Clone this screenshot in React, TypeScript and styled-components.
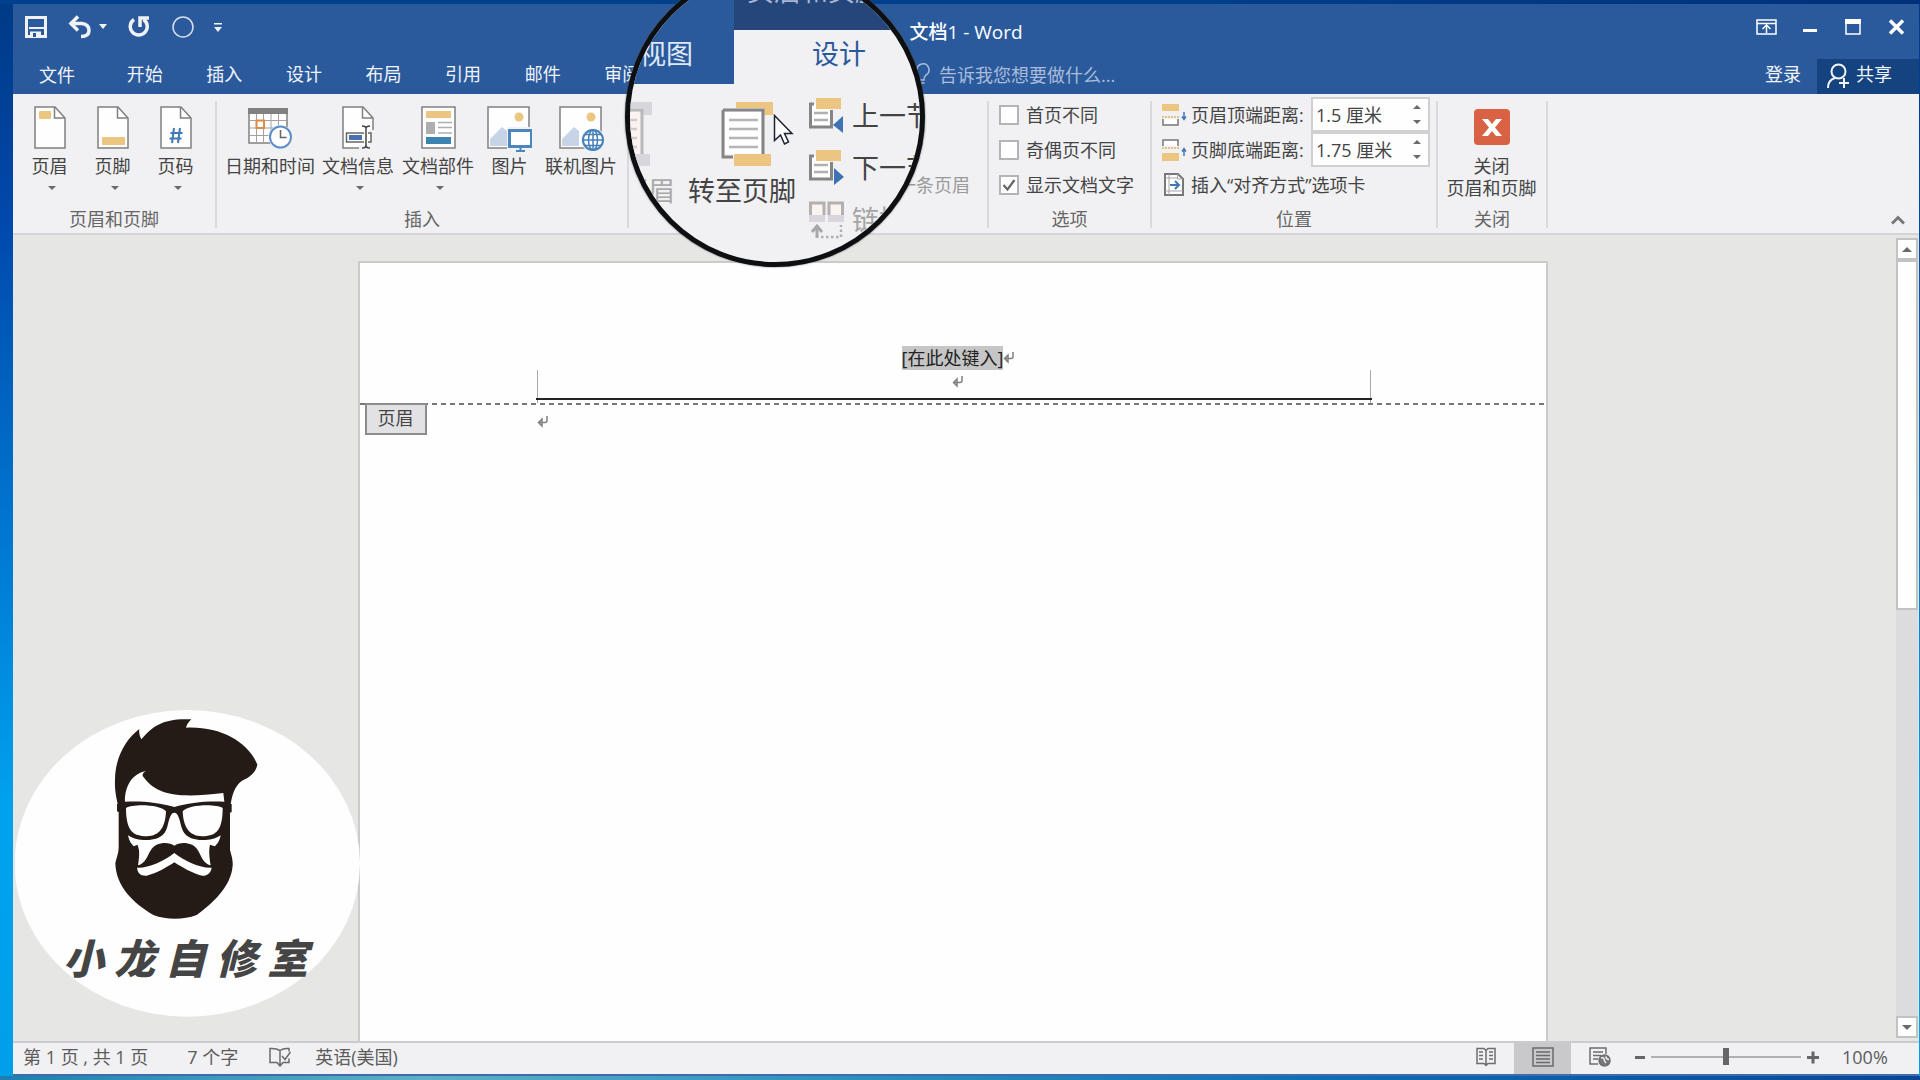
import React, { useState } from "react";
import styled, { createGlobalStyle, css } from "styled-components";

const color = {
  brand: "#2b5a9c",
  brandDark: "#14437f",
  ribbon: "#f1f1f3",
  line: "#d4d4d6",
  canvas: "#e6e6e5",
  text: "#444444",
  muted: "#666666",
  icon: "#808080",
  amber: "#ecc681",
  blue: "#3f78b5",
};

const GlobalStyle = createGlobalStyle`
  * { box-sizing: border-box; }
  body { margin: 0; overflow: hidden; }
  button, input, a {
    font: inherit;
    color: inherit;
    padding: 0;
    margin: 0;
    border: 0;
    background: none;
    text-decoration: none;
    text-align: inherit;
  }
  svg { display: block; flex: none; }
`;

const Desktop = styled.div`
  position: relative;
  display: flex;
  height: 100vh;
  padding: 4px 1px 4px 13px;
  overflow: hidden;
  font-family: "Open Sans", "Noto Sans CJK SC", sans-serif;
  font-size: 18px;
  line-height: 24px;
  color: ${color.text};
  background:
    linear-gradient(90deg, #1c7fb0, #5fb0c4 22%, #2b8fc0 45%, #0f6cb4 70%, #0a4596) bottom / 100% 4px no-repeat,
    linear-gradient(90deg, #00418f, #00408c 60%, #00307a) top / 100% 4px no-repeat,
    linear-gradient(180deg, #003a85, #0048ab 20%, #0078d2 50%, #00a2ee 75%, #009fea);
`;

const Window = styled.main`
  position: relative;
  flex: 1;
  display: flex;
  flex-direction: column;
  min-width: 0;
  background: ${color.brand};
  border-bottom: 2px solid #3f6cab;
`;

/* ---------- title bar and tabs ---------- */

const TitleBar = styled.header`
  display: grid;
  grid-template-columns: 1fr auto 1fr;
  height: 52px;
  color: #fff;
`;

const QuickTools = styled.div`
  display: flex;
  align-items: flex-start;
  padding: 11px 0 0 11px;
`;

const ToolButton = styled.button<{ $gap?: number }>`
  display: flex;
  align-items: center;
  height: 24px;
  margin-right: ${(p) => p.$gap ?? 0}px;
`;

const Title = styled.h1`
  margin: 0;
  padding-top: 16px;
  font-size: 19px;
  line-height: 24px;
  font-weight: 500;
`;

const WindowControls = styled.div`
  display: flex;
  justify-content: flex-end;
  align-items: flex-start;
  gap: 26px;
  padding: 11px 14px 0 0;
`;

const TabBar = styled.nav`
  display: flex;
  height: 38px;
  color: #f0f4fa;
`;

const FileTab = styled.button`
  width: 92px;
  padding: 1px 0 2px 26px;
`;

const Tabs = styled.div`
  display: flex;
  width: 557px;
`;

const Tab = styled.button`
  flex: 1;
  padding-bottom: 2px;
  text-align: center;
`;

const TellMe = styled.label`
  flex: 1;
  display: flex;
  align-items: center;
  gap: 8px;
  padding: 0 0 0 252px;
  color: #a9bcdb;
`;

const TellMeInput = styled.input`
  width: 220px;
  outline: none;
  &::placeholder {
    color: #a9bcdb;
    opacity: 1;
  }
`;

const SignIn = styled.a`
  padding: 6px 16px 0 0;
`;

const Share = styled.button`
  display: flex;
  align-items: center;
  gap: 6px;
  align-self: flex-start;
  width: 102px;
  height: 35px;
  margin-top: 3px;
  padding: 0 0 5px 10px;
  background: ${color.brandDark};
  svg {
    margin-top: 4px;
  }
`;

/* ---------- ribbon ---------- */

const Ribbon = styled.section`
  display: flex;
  height: 141px;
  padding: 7px 0 5px;
  background: ${color.ribbon};
  border-bottom: 2px solid ${color.line};
`;

const Group = styled.section<{ $width: number }>`
  display: flex;
  flex-direction: column;
  min-width: ${(p) => p.$width}px;
  border-right: 2px solid #dadadc;
`;

const GroupBody = styled.div<{ $end?: boolean }>`
  flex: 1;
  display: flex;
  padding-left: 5px;
  justify-content: ${(p) => (p.$end ? "flex-end" : "flex-start")};
`;

const GroupName = styled.h2`
  margin: 0;
  font-size: 18px;
  line-height: 18px;
  font-weight: 400;
  text-align: center;
  color: ${color.muted};
`;

const LargeButton = styled.button<{ $width: number }>`
  display: flex;
  flex-direction: column;
  align-items: center;
  justify-content: flex-start;
  width: ${(p) => p.$width}px;
  padding-top: 5px;
  white-space: nowrap;
  text-align: center;
`;

const IconBox = styled.span`
  display: flex;
  justify-content: center;
  height: 49px;
`;

const LargeLabel = styled.span`
  line-height: 22px;
`;

const Caret = styled.i<{ $up?: boolean; $size?: number }>`
  display: block;
  border: ${(p) => p.$size ?? 4}px solid transparent;
  ${(p) =>
    p.$up
      ? css`border-top-width: 0; border-bottom-color: #6a6a6a;`
      : css`border-bottom-width: 0; border-top-color: #6a6a6a;`}
`;

const ButtonCaret = styled(Caret)`
  margin: 9px 0 0 4px;
`;

const Rows = styled.div`
  display: grid;
  grid-auto-rows: 35px;
  align-content: start;
  align-items: center;
  margin-top: -4px;
  padding-left: 5px;
`;

const CheckRow = styled.label`
  display: flex;
  align-items: center;
  gap: 7px;
  white-space: nowrap;
`;

const CheckBox = styled.input`
  appearance: none;
  width: 20px;
  height: 20px;
  border: 2px solid #b4b4b4;
  background: #fefefe;
  &:checked {
    background: #fefefe
      url("data:image/svg+xml,%3Csvg xmlns='http://www.w3.org/2000/svg' viewBox='0 0 16 16'%3E%3Cpath d='M2.5 8l4 4.5L13.500 3' fill='none' stroke='%23666' stroke-width='2.200'/%3E%3C/svg%3E");
  }
`;

const DistanceRow = styled.div`
  display: flex;
  align-items: center;
  gap: 4px;
`;

const DistanceLabel = styled.label`
  width: 116px;
  white-space: nowrap;
`;

const Spinner = styled.span`
  display: flex;
  width: 119px;
  height: 35px;
  border: 2px solid #d0d0d2;
  background: #fefefe;
`;

const SpinnerInput = styled.input`
  flex: 1;
  min-width: 0;
  padding-left: 3px;
  outline: none;
`;

const SpinnerArrows = styled.span`
  display: grid;
  grid-template-rows: 1fr 1fr;
  width: 15px;
`;

const SpinnerArrow = styled.button`
  display: flex;
  align-items: center;
`;

const RowButton = styled.button`
  display: flex;
  align-items: center;
  gap: 4px;
  white-space: nowrap;
`;

const LinkPrevious = styled.button`
  align-self: flex-start;
  height: 34px;
  margin: 67px 17px 0 0;
  color: #9a9a9a;
`;

const Collapse = styled.button`
  align-self: flex-end;
  margin: 0 14px 0 auto;
`;

/* ---------- document ---------- */

const Workspace = styled.div`
  flex: 1;
  display: flex;
  min-height: 0;
  background: ${color.canvas};
`;

const Canvas = styled.div`
  flex: 1;
  display: flex;
  justify-content: center;
  padding: 26px 4px 0 0;
`;

const Page = styled.article`
  width: 1190px;
  background: #fefefe;
  border: 2px solid #cbcbcc;
  border-bottom: 0;
`;

const HeaderZone = styled.div`
  display: flex;
  flex-direction: column;
  align-items: center;
  height: 140px;
  padding-top: 83px;
`;

const HeaderLine = styled.div`
  display: flex;
  align-items: center;
  padding-left: 12px;
  color: #222;
`;

const Placeholder = styled.span`
  background: #c6c6c6;
`;

const HeaderMark = styled.div`
  padding: 6px 0 0 11px;
`;

const HeaderEdges = styled.div`
  align-self: stretch;
  height: 36px;
  margin: -18px 175px 0 177px;
  border: 1px solid #a8a8a8;
  border-width: 0 1px;
  padding-top: 28px;
`;

const HeaderRule = styled.hr`
  margin: 0 -2px;
  border: 0;
  height: 2px;
  background: #222;
`;

const Boundary = styled.div`
  height: 2px;
  background: repeating-linear-gradient(90deg, #777 0 5px, transparent 5px 9px);
`;

const BodyStart = styled.div`
  display: flex;
  align-items: flex-start;
`;

const HeaderTag = styled.span`
  width: 62px;
  height: 32px;
  margin: -2px 0 0 5px;
  border: 2px solid #8c8c8e;
  background: #e2e2e4;
  line-height: 26px;
  text-align: center;
`;

const BodyMark = styled.span`
  padding: 11px 0 0 110px;
`;

const ScrollBar = styled.div`
  display: flex;
  flex-direction: column;
  width: 22px;
  margin: 3px 1px 3px 0;
  background: #dcdcde;
`;

const ScrollButton = styled.button`
  display: flex;
  align-items: center;
  justify-content: center;
  height: 22px;
  border: 2px solid #c2c2c4;
  background: #fefefe;
`;

const ScrollThumb = styled.div`
  flex: 46;
  border: 2px solid #c2c2c4;
  background: #fefefe;
`;

const ScrollTrack = styled.div`
  flex: 54;
`;

/* ---------- status bar ---------- */

const StatusBar = styled.footer`
  display: flex;
  align-items: center;
  height: 33px;
  padding-left: 10px;
  background: ${color.ribbon};
  border-top: 2px solid #cbcbcd;
  color: #5c5c5c;
  white-space: pre;
`;

const StatusItem = styled.button<{ $gap?: number }>`
  margin-right: ${(p) => p.$gap ?? 0}px;
  padding-bottom: 4px;
`;

const StatusRight = styled.div`
  display: flex;
  align-items: center;
  align-self: stretch;
  margin-left: auto;
  padding-right: 22px;
`;

const ViewButton = styled.button<{ $on?: boolean }>`
  display: flex;
  align-items: center;
  justify-content: center;
  align-self: stretch;
  width: 57px;
  padding-bottom: 3px;
  background: ${(p) => (p.$on ? "#c9c9cb" : "transparent")};
`;

const ZoomStep = styled.button`
  display: flex;
  padding-bottom: 4px;
`;

const ZoomRange = styled.input`
  appearance: none;
  width: 150px;
  height: 20px;
  margin: 0 5px 4px;
  background: linear-gradient(#b0b0b0, #b0b0b0) center / 100% 2px no-repeat;
  &::-webkit-slider-thumb {
    appearance: none;
    width: 6px;
    height: 17px;
    background: #666;
  }
`;

const ZoomValue = styled.output`
  width: 77px;
  padding: 0 0 4px 22px;
`;

/* ---------- channel badge ---------- */

const Badge = styled.aside`
  position: absolute;
  left: 2px;
  bottom: 57px;
  width: 345px;
  height: 307px;
`;

const BadgeName = styled.div`
  position: absolute;
  left: 48px;
  top: 220px;
  display: flex;
  gap: 10px;
  font-size: 41px;
  line-height: 56px;
  font-weight: 900;
  font-style: italic;
  color: #454545;
`;

/* ---------- magnifier ---------- */

const Lens = styled.div`
  position: absolute;
  left: 625px;
  top: -33px;
  width: 300px;
  height: 300px;
  border: 5px solid #0d0f12;
  border-radius: 50%;
  overflow: hidden;
  background: ${color.ribbon};
  font-size: 27px;
  line-height: 36px;
  white-space: nowrap;
  box-shadow: 0 0 2px #555;
`;

const LensTabs = styled.div`
  display: flex;
  height: 112px;
`;

const LensViewTab = styled.button`
  width: 104px;
  padding: 52px 0 0 9px;
  background: ${color.brand};
  color: #dfe8f5;
`;

const LensContext = styled.div`
  flex: 1;
  display: flex;
  flex-direction: column;
  min-width: 0;
`;

const LensContextName = styled.span`
  height: 58px;
  padding-left: 13px;
  line-height: 38px;
  background: #24467a;
  color: #a9b8d2;
`;

const LensDesignTab = styled.button`
  padding: 6px 0 0 78px;
  color: ${color.brand};
`;

const LensBody = styled.div`
  display: flex;
  gap: 13px;
`;

const LensLarge = styled.button<{ $muted?: boolean }>`
  flex: none;
  display: flex;
  flex-direction: column;
  align-items: flex-start;
  justify-content: flex-start;
  gap: 7px;
  width: 108px;
  padding-top: 17px;
  color: ${(p) => (p.$muted ? "#aaaaaa" : color.text)};
  &:first-child {
    margin-left: -63px;
  }
  svg {
    align-self: flex-end;
    margin-right: 18px;
  }
`;

const LensRows = styled.div`
  display: grid;
  grid-auto-rows: 52px;
  padding-top: 6px;
`;

const LensRow = styled.button<{ $muted?: boolean }>`
  display: flex;
  align-items: center;
  gap: 8px;
  color: ${(p) => (p.$muted ? "#a4a4a4" : color.text)};
`;

const Pointer = styled.svg`
  position: absolute;
  left: 773px;
  top: 114px;
`;

/* ---------- icons ---------- */

const DocShape = ({ kind }: { kind: "header" | "footer" | "number" | "info" }) => (
  <svg width="32" height="43" viewBox="0 0 32 43">
    <path d="M1 1h20l10 11v30H1z" fill="#fefefe" stroke={color.icon} strokeWidth="1.500" />
    <path d="M20.500 1v11H31" fill="none" stroke={color.icon} strokeWidth="1.500" />
    {kind === "header" && <rect x="5" y="5" width="12" height="8" rx="1" fill={color.amber} />}
    {kind === "footer" && <rect x="5" y="31" width="23" height="8" rx="1" fill={color.amber} />}
    {kind === "number" && (
      <path d="M14 22l-2 15M20 22l-2 15M10.500 27h12M9.500 32.500h12" stroke={color.blue} strokeWidth="2" fill="none" />
    )}
    {kind === "info" && (
      <g>
        <path d="M17 39h15v4H17zM27 24h5v18h-5z" fill={color.ribbon} />
        <path d="M22 27H4.500v9H22M26 27h3v9h-3" fill="#fefefe" stroke="#666" strokeWidth="1.500" />
        <rect x="7" y="29" width="13" height="5" fill="#4a70b0" />
        <path d="M20 20q4 0 4 2.500v17q0 2.500-4 2.500M28 20q-4 0-4 2.500v17q0 2.500 4 2.500" fill="none" stroke="#444" strokeWidth="1.500" />
      </g>
    )}
  </svg>
);

const CalendarIcon = () => (
  <svg width="44" height="43" viewBox="0 0 44 43">
    <rect x="1" y="3" width="38" height="34" fill="#fefefe" stroke={color.icon} strokeWidth="1.500" />
    <rect x="0" y="2" width="40" height="6" fill={color.icon} />
    <path d="M8.500 8v29M15.500 8v29M23 8v29M30.500 8v29M1 14.500h38M1 22h38M1 29.500h38" stroke="#a2a2a2" fill="none" />
    <rect x="8.500" y="14.500" width="7.500" height="7.500" fill="#fefefe" stroke="#de8b45" strokeWidth="2" />
    <circle cx="32.500" cy="31" r="12" fill={color.ribbon} />
    <circle cx="32.500" cy="31" r="10.500" fill="#fefefe" stroke="#5b8fc7" strokeWidth="2" />
    <path d="M32.500 24v7.500h6" fill="none" stroke="#666" strokeWidth="1.500" />
  </svg>
);

const PartsIcon = () => (
  <svg width="35" height="43" viewBox="0 0 35 43">
    <rect x="1" y="1" width="33" height="41" fill="#fefefe" stroke={color.icon} strokeWidth="1.500" />
    <rect x="5" y="5" width="25" height="7" fill={color.amber} />
    <rect x="5" y="16" width="9" height="12" fill="#aeaeae" />
    <path d="M17 16.500h14M17 21.500h14M17 27h14" stroke="#aeaeae" strokeWidth="1.500" />
    <rect x="5" y="31" width="25" height="7" fill="#3d84b0" />
  </svg>
);

const PictureIcon = ({ online }: { online?: boolean }) => (
  <svg width="45" height="46" viewBox="0 0 45 46">
    <rect x="1" y="1" width="41" height="41" fill="#fefefe" stroke={color.icon} strokeWidth="1.500" />
    <circle cx="32" cy="11" r="4.500" fill={color.amber} />
    <path d="M3 40v-7l12-12 5 4v15z" fill="#c7d3e6" />
    {online ? (
      <g fill="none" stroke="#4580bb" strokeWidth="1.500">
        <circle cx="34" cy="34" r="12" fill={color.ribbon} stroke="none" />
        <circle cx="34" cy="34" r="10" fill="#fefefe" strokeWidth="2" />
        <ellipse cx="34" cy="34" rx="4.500" ry="10" />
        <path d="M24 34h20M34 24v20M26 28.500h16M26 39.500h16" />
      </g>
    ) : (
      <g>
        <path d="M20 21h25v25H20z" fill={color.ribbon} />
        <rect x="22.500" y="24.500" width="22" height="16" fill="#fefefe" stroke="#4b86bd" strokeWidth="3" />
        <path d="M33.500 41v3M29 45h9" stroke="#4b86bd" strokeWidth="2" />
      </g>
    )}
  </svg>
);

const DistanceIcon = ({ bottom }: { bottom?: boolean }) => (
  <svg width="25" height="22" viewBox="0 0 25 22">
    {bottom ? (
      <g>
        <path d="M1 7V1h15v6" fill="#fefefe" stroke="#777" strokeWidth="1.500" />
        <path d="M0 9h18" stroke="#e0b068" strokeWidth="1.500" strokeDasharray="2 1" />
        <rect y="14" width="17" height="8" fill={color.amber} />
        <path d="M22 17v-7M20 12.500l2-3 2 3" fill="none" stroke={color.blue} strokeWidth="1.500" />
      </g>
    ) : (
      <g>
        <rect width="17" height="7" fill={color.amber} />
        <path d="M0 13h18" stroke="#e0b068" strokeWidth="1.500" strokeDasharray="2 1" />
        <path d="M1 15v6h15v-6" fill="#fefefe" stroke="#777" strokeWidth="1.500" />
        <path d="M22 8v7M20 12.500l2 3 2-3" fill="none" stroke={color.blue} strokeWidth="1.500" />
      </g>
    )}
  </svg>
);

const AlignTabIcon = () => (
  <svg width="25" height="24" viewBox="0 0 25 24">
    <path d="M3 1h13l5 5v16H3z" fill="#fefefe" stroke="#777" strokeWidth="2" />
    <path d="M7 1v21M3 5h12M3 18h18M15.500 1v5H21" fill="none" stroke="#a5a5a5" />
    <path d="M8 12h9M13 8l4 4-4 4" fill="none" stroke={color.blue} strokeWidth="2" />
  </svg>
);

const ReturnMark = () => (
  <svg width="12" height="12" viewBox="0 0 12 12">
    <path d="M10 0v4.500q0 2-2 2H2M5 3L1.500 6.500 5 10z" fill="none" stroke="#808080" strokeWidth="1.500" />
  </svg>
);

const GotoIcon = ({ muted }: { muted?: boolean }) => (
  <svg width="60" height="65" viewBox="0 0 60 65">
    <path d="M18 1h37v13h-9V7H18z" fill={muted ? "#d8d6dc" : color.amber} />
    <path d="M5 9h40v44M5 9v47h10" fill="none" stroke={muted ? "#b8b8ba" : "#858585"} strokeWidth="3" />
    <path d="M7 11h36v42H7z" fill={muted ? "#fbf3f1" : "#fefefe"} />
    <path d="M11 19h29M11 28h29M11 37h29M11 46h29" stroke={muted ? "#d9c8c8" : "#b5b5b5"} strokeWidth="2.500" />
    <rect x="16" y="53" width="37" height="12" rx="1" fill={muted ? "#d8d6dc" : color.amber} />
  </svg>
);

const SectionIcon = ({ next }: { next?: boolean }) => (
  <svg width="35" height="36" viewBox="0 0 35 36">
    <path d="M5 6H1.500v23h21V12" fill="#fefefe" stroke="#858585" strokeWidth="3" />
    <path d="M5 15h14M5 22h14" stroke="#b0b0b0" strokeWidth="2.500" />
    <rect x="7" y="0" width="25" height="11" fill={color.amber} />
    <path d={next ? "M25 18v17l10-8z" : "M34 18v17l-10-8z"} fill="#3f72b4" />
  </svg>
);

const LinkIcon = () => (
  <svg width="35" height="38" viewBox="0 0 35 38">
    <path d="M1.500 14V2H15v12M20 14V2h13.500v12" fill="#fbf3f0" stroke="#b5b0b0" strokeWidth="3" />
    <path d="M0 14h16v7H0zM19 14h16v7H19z" fill="#d8d5dc" />
    <path d="M8 37V26M3 31l5-6 5 6" fill="none" stroke="#a8a8a8" strokeWidth="3" />
    <path d="M12 36h20V24" fill="none" stroke="#b0b0b0" strokeWidth="2.500" strokeDasharray="2.500 2.500" />
  </svg>
);

const Portrait = () => (
  <svg width="345" height="307" viewBox="45 60 1035 921">
    <ellipse cx="562" cy="520" rx="518" ry="460" fill="#fefefe" />
    <path
      fill="#241b17"
      d="M345 270C345 200 380 145 418 117C416 130 420 140 424 148C458 108 490 84 574 88C566 96 560 104 558 113C660 108 745 155 772 224C765 255 742 264 725 273C702 290 696 320 692 342H695V366L690 368V480C697 505 700 515 697 535C690 590 640 640 590 675C550 690 500 690 460 675C400 640 348 590 346 520C350 500 356 490 356 470V366L351 364V342H353C346 310 344 290 345 270Z"
    />
    <g fill="#fefefe">
      <path d="M375 335C374 290 395 252 437 243C430 248 427 252 428 258C465 310 520 328 670 309L673 335C620 332 565 338 523 351C480 338 425 332 375 335Z" />
      <path d="M378 354C400 340 484 344 498 364C496 410 480 438 440 439C400 438 378 425 378 354Z" />
      <path d="M668 354C646 340 562 344 548 364C550 410 566 438 606 439C646 438 668 425 668 354Z" />
      <path d="M523 368C512 368 508 385 502 410C494 440 470 451 430 450C410 449 395 444 384 436C388 455 396 465 402 469L412 464C420 480 418 500 414 526C448 515 440 480 470 464C490 456 510 458 523 467C536 458 556 456 576 464C606 480 598 515 632 526C628 500 626 480 630 464L644 469C650 465 658 455 662 436C651 444 636 449 616 450C576 451 552 440 544 410C538 385 534 368 523 368Z" />
      <path d="M411 533C440 536 490 515 523 489C556 515 606 536 635 533C632 552 618 560 600 556C580 550 545 532 523 517C500 532 470 550 440 557C420 558 413 548 411 533Z" />
    </g>
  </svg>
);

const tabs = ["开始", "插入", "设计", "布局", "引用", "邮件", "审阅"];

export default function App() {
  const [zoom, setZoom] = useState(50);
  const [top, setTop] = useState("1.5 厘米");
  const [bottom, setBottom] = useState("1.75 厘米");

  return (
    <Desktop>
      <GlobalStyle />
      <Window>
        <TitleBar>
          <QuickTools>
            <ToolButton $gap={20} aria-label="保存">
              <svg width="24" height="24" viewBox="0 0 24 24" fill="none" stroke="#f0f2f6">
                <path d="M2.500 2.500h19v19h-19z" strokeWidth="3" />
                <path d="M5 13h15" strokeWidth="2" />
                <path d="M6 16.500h11V22H6z" fill="#f0f2f6" stroke="none" />
                <path d="M9 18h3v4H9z" fill={color.brand} stroke="none" />
              </svg>
            </ToolButton>
            <ToolButton $gap={19} aria-label="撤消">
              <svg width="41" height="24" viewBox="0 0 41 24" fill="none" stroke="#f0f2f6">
                <path d="M2 8.500h12q7 1 7 7t-8 6" strokeWidth="3.500" />
                <path d="M10 1.500L3 8.500l7 7" strokeWidth="3.500" />
                <path d="M31 9h8l-4 5z" fill="#f0f2f6" stroke="none" />
              </svg>
            </ToolButton>
            <ToolButton $gap={21} aria-label="重复">
              <svg width="22" height="24" viewBox="0 0 22 24" fill="none" stroke="#f0f2f6">
                <path d="M6 4.500a8.500 8.500 0 1 0 9.500 0" strokeWidth="3.500" />
                <path d="M12 12V3h9" strokeWidth="3.500" />
              </svg>
            </ToolButton>
            <ToolButton $gap={18} aria-label="椭圆">
              <svg width="24" height="24" viewBox="0 0 24 24">
                <circle cx="12" cy="12" r="10" fill="none" stroke="#d8e0ee" strokeWidth="1.500" />
              </svg>
            </ToolButton>
            <ToolButton aria-label="自定义快速访问工具栏">
              <svg width="10" height="24" viewBox="0 0 10 24" fill="#f0f2f6">
                <path d="M1 8h8v1.500H1zM1 12h8l-4 5z" />
              </svg>
            </ToolButton>
          </QuickTools>
          <Title>文档1 - Word</Title>
          <WindowControls>
            <ToolButton aria-label="功能区显示选项">
              <svg width="21" height="24" viewBox="0 0 21 24" fill="none" stroke="#fff" strokeWidth="1.500">
                <path d="M1 5h19v14H1zM1 8.500h19M10.500 18v-7M6.500 14l4-4 4 4" />
              </svg>
            </ToolButton>
            <ToolButton aria-label="最小化">
              <svg width="15" height="24" viewBox="0 0 15 24"><path d="M0 14h14v3H0z" fill="#fff" /></svg>
            </ToolButton>
            <ToolButton aria-label="最大化">
              <svg width="18" height="24" viewBox="0 0 18 24">
                <path d="M2 5h14v14H2z" fill="none" stroke="#fff" strokeWidth="1.500" />
                <path d="M1 4h16v5H1z" fill="#fff" />
              </svg>
            </ToolButton>
            <ToolButton aria-label="关闭">
              <svg width="17" height="24" viewBox="0 0 17 24">
                <path d="M2 5.500l13 13M15 5.500l-13 13" stroke="#fff" strokeWidth="3.500" />
              </svg>
            </ToolButton>
          </WindowControls>
        </TitleBar>

        <TabBar>
          <FileTab>文件</FileTab>
          <Tabs>
            {tabs.map((name) => (
              <Tab key={name}>{name}</Tab>
            ))}
          </Tabs>
          <TellMe>
            <svg width="17" height="24" viewBox="0 0 17 24" fill="none" stroke="#a9bcdb" strokeWidth="1.500">
              <path d="M3 7a6 6 0 1 1 9 5q-2 2-2 5H6M6.500 20h4" />
            </svg>
            <TellMeInput aria-label="告诉我" placeholder="告诉我您想要做什么..." />
          </TellMe>
          <SignIn href="#">登录</SignIn>
          <Share>
            <svg width="23" height="26" viewBox="0 0 23 26" fill="none" stroke="#f0f4fa" strokeWidth="2">
              <circle cx="11.500" cy="8.500" r="7" />
              <path d="M1 25q0-8 7-10M12 20h10M17 15v10" />
            </svg>
            共享
          </Share>
        </TabBar>

        <Ribbon>
          <Group $width={204}>
            <GroupBody>
              <LargeButton $width={63}>
                <IconBox><DocShape kind="header" /></IconBox>
                <LargeLabel>页眉</LargeLabel>
                <ButtonCaret />
              </LargeButton>
              <LargeButton $width={63}>
                <IconBox><DocShape kind="footer" /></IconBox>
                <LargeLabel>页脚</LargeLabel>
                <ButtonCaret />
              </LargeButton>
              <LargeButton $width={63}>
                <IconBox><DocShape kind="number" /></IconBox>
                <LargeLabel>页码</LargeLabel>
                <ButtonCaret />
              </LargeButton>
            </GroupBody>
            <GroupName>页眉和页脚</GroupName>
          </Group>

          <Group $width={412}>
            <GroupBody>
              <LargeButton $width={96}>
                <IconBox><CalendarIcon /></IconBox>
                <LargeLabel>日期和时间</LargeLabel>
              </LargeButton>
              <LargeButton $width={80}>
                <IconBox><DocShape kind="info" /></IconBox>
                <LargeLabel>文档信息</LargeLabel>
                <ButtonCaret />
              </LargeButton>
              <LargeButton $width={80}>
                <IconBox><PartsIcon /></IconBox>
                <LargeLabel>文档部件</LargeLabel>
                <ButtonCaret />
              </LargeButton>
              <LargeButton $width={63}>
                <IconBox><PictureIcon /></IconBox>
                <LargeLabel>图片</LargeLabel>
              </LargeButton>
              <LargeButton $width={80}>
                <IconBox><PictureIcon online /></IconBox>
                <LargeLabel>联机图片</LargeLabel>
              </LargeButton>
            </GroupBody>
            <GroupName>插入</GroupName>
          </Group>

          <Group $width={360} aria-label="导航">
            <GroupBody $end>
              <LinkPrevious>链接到前一条页眉</LinkPrevious>
            </GroupBody>
          </Group>

          <Group $width={163}>
            <GroupBody>
              <Rows>
                <CheckRow><CheckBox type="checkbox" />首页不同</CheckRow>
                <CheckRow><CheckBox type="checkbox" />奇偶页不同</CheckRow>
                <CheckRow><CheckBox type="checkbox" defaultChecked />显示文档文字</CheckRow>
              </Rows>
            </GroupBody>
            <GroupName>选项</GroupName>
          </Group>

          <Group $width={286}>
            <GroupBody>
              <Rows>
                <DistanceRow>
                  <DistanceIcon />
                  <DistanceLabel htmlFor="top">页眉顶端距离:</DistanceLabel>
                  <Spinner>
                    <SpinnerInput id="top" value={top} onChange={(e) => setTop(e.target.value)} />
                    <SpinnerArrows>
                      <SpinnerArrow aria-label="增大"><Caret $up /></SpinnerArrow>
                      <SpinnerArrow aria-label="减小"><Caret /></SpinnerArrow>
                    </SpinnerArrows>
                  </Spinner>
                </DistanceRow>
                <DistanceRow>
                  <DistanceIcon bottom />
                  <DistanceLabel htmlFor="bottom">页脚底端距离:</DistanceLabel>
                  <Spinner>
                    <SpinnerInput id="bottom" value={bottom} onChange={(e) => setBottom(e.target.value)} />
                    <SpinnerArrows>
                      <SpinnerArrow aria-label="增大"><Caret $up /></SpinnerArrow>
                      <SpinnerArrow aria-label="减小"><Caret /></SpinnerArrow>
                    </SpinnerArrows>
                  </Spinner>
                </DistanceRow>
                <RowButton><AlignTabIcon />插入“对齐方式”选项卡</RowButton>
              </Rows>
            </GroupBody>
            <GroupName>位置</GroupName>
          </Group>

          <Group $width={110}>
            <GroupBody>
              <LargeButton $width={97}>
                <IconBox>
                  <svg width="36" height="43" viewBox="0 0 36 43">
                    <rect y="3" width="36" height="36" rx="4" fill="#d96244" />
                    <path d="M8 13h6l4 5 4-5h6l-7 8.500 7 8.500h-6l-4-5-4 5H8l7-8.500z" fill="#fff" />
                  </svg>
                </IconBox>
                <LargeLabel>关闭<br />页眉和页脚</LargeLabel>
              </LargeButton>
            </GroupBody>
            <GroupName>关闭</GroupName>
          </Group>

          <Collapse aria-label="折叠功能区">
            <svg width="14" height="14" viewBox="0 0 14 14">
              <path d="M1 9.500L7 3.500l6 6" fill="none" stroke="#777" strokeWidth="3" />
            </svg>
          </Collapse>
        </Ribbon>

        <Workspace>
          <Canvas>
            <Page>
              <HeaderZone>
                <HeaderLine>
                  <Placeholder>[在此处键入]</Placeholder>
                  <ReturnMark />
                </HeaderLine>
                <HeaderMark><ReturnMark /></HeaderMark>
                <HeaderEdges><HeaderRule /></HeaderEdges>
              </HeaderZone>
              <Boundary />
              <BodyStart>
                <HeaderTag>页眉</HeaderTag>
                <BodyMark><ReturnMark /></BodyMark>
              </BodyStart>
            </Page>
          </Canvas>
          <ScrollBar>
            <ScrollButton aria-label="向上滚动"><Caret $up $size={5} /></ScrollButton>
            <ScrollThumb />
            <ScrollTrack />
            <ScrollButton aria-label="向下滚动"><Caret $size={5} /></ScrollButton>
          </ScrollBar>
        </Workspace>

        <StatusBar>
          <StatusItem $gap={39}>第 1 页 , 共 1 页</StatusItem>
          <StatusItem $gap={31}>7 个字</StatusItem>
          <StatusItem $gap={24} aria-label="校对">
            <svg width="22" height="20" viewBox="0 0 22 20" fill="none" stroke="#6a6a6a" strokeWidth="1.500">
              <path d="M11 3.500Q7 1 1 1.500v14h7l3 3.500 3-3.500h6v-4M11 3.500V18M11 3.500Q14 1 20 1.500v3M13 9l3 3.500L21.500 5" />
            </svg>
          </StatusItem>
          <StatusItem>英语(美国)</StatusItem>
          <StatusRight>
            <ViewButton aria-label="阅读视图">
              <svg width="20" height="20" viewBox="0 0 20 20" fill="none" stroke="#6e6e6e" strokeWidth="1.500">
                <path d="M1 1.500h7l2 2 2-2h7v15h-7l-2 2-2-2H1zM10 3v16M3 5h4M3 8.500h4M3 12h4M13 5h4M13 8.500h4M13 12h4" />
              </svg>
            </ViewButton>
            <ViewButton $on aria-label="页面视图">
              <svg width="22" height="20" viewBox="0 0 22 20" fill="none" stroke="#6a6a6a" strokeWidth="1.500">
                <path d="M1 1h20v18H1zM4 5h14M4 8.500h14M4 12h14M4 15.500h14" />
              </svg>
            </ViewButton>
            <ViewButton aria-label="Web 版式视图">
              <svg width="22" height="20" viewBox="0 0 22 20" fill="none" stroke="#6e6e6e" strokeWidth="1.500">
                <path d="M17 7V1H1v16h8M4 5h10M4 8.500h8M4 12h5" />
                <circle cx="15.500" cy="13.500" r="5.500" fill="#777" />
                <path d="M12 11q3-1 3 1t2 4M17 9.500q0 3 3 3" stroke="#f1f1f3" />
              </svg>
            </ViewButton>
            <ZoomStep aria-label="缩小">
              <svg width="18" height="20" viewBox="0 0 18 20"><path d="M7 9h10v3H7z" fill="#666" /></svg>
            </ZoomStep>
            <ZoomRange type="range" aria-label="缩放" value={zoom} onChange={(e) => setZoom(Number(e.target.value))} />
            <ZoomStep aria-label="放大">
              <svg width="14" height="20" viewBox="0 0 14 20"><path d="M1 9h12v3H1zM5.500 4.500h3v12h-3z" fill="#666" /></svg>
            </ZoomStep>
            <ZoomValue>100%</ZoomValue>
          </StatusRight>
        </StatusBar>

        <Badge>
          <Portrait />
          <BadgeName>
            {["小", "龙", "自", "修", "室"].map((c) => (
              <span key={c}>{c}</span>
            ))}
          </BadgeName>
        </Badge>
      </Window>

      <Lens>
        <LensTabs>
          <LensViewTab>视图</LensViewTab>
          <LensContext>
            <LensContextName>页眉和页脚工具</LensContextName>
            <LensDesignTab>设计</LensDesignTab>
          </LensContext>
        </LensTabs>
        <LensBody>
          <LensLarge $muted><GotoIcon muted />转至页眉</LensLarge>
          <LensLarge><GotoIcon />转至页脚</LensLarge>
          <LensRows>
            <LensRow><SectionIcon />上一节</LensRow>
            <LensRow><SectionIcon next />下一节</LensRow>
            <LensRow $muted><LinkIcon />链接</LensRow>
          </LensRows>
        </LensBody>
      </Lens>
      <Pointer width="22" height="32" viewBox="0 0 22 32">
        <path d="M1.500 1.500v25l6-5.500 4 9 4-2-4-8.500h7.500z" fill="#fefefe" stroke="#1c2230" strokeWidth="1.500" />
      </Pointer>
    </Desktop>
  );
}
